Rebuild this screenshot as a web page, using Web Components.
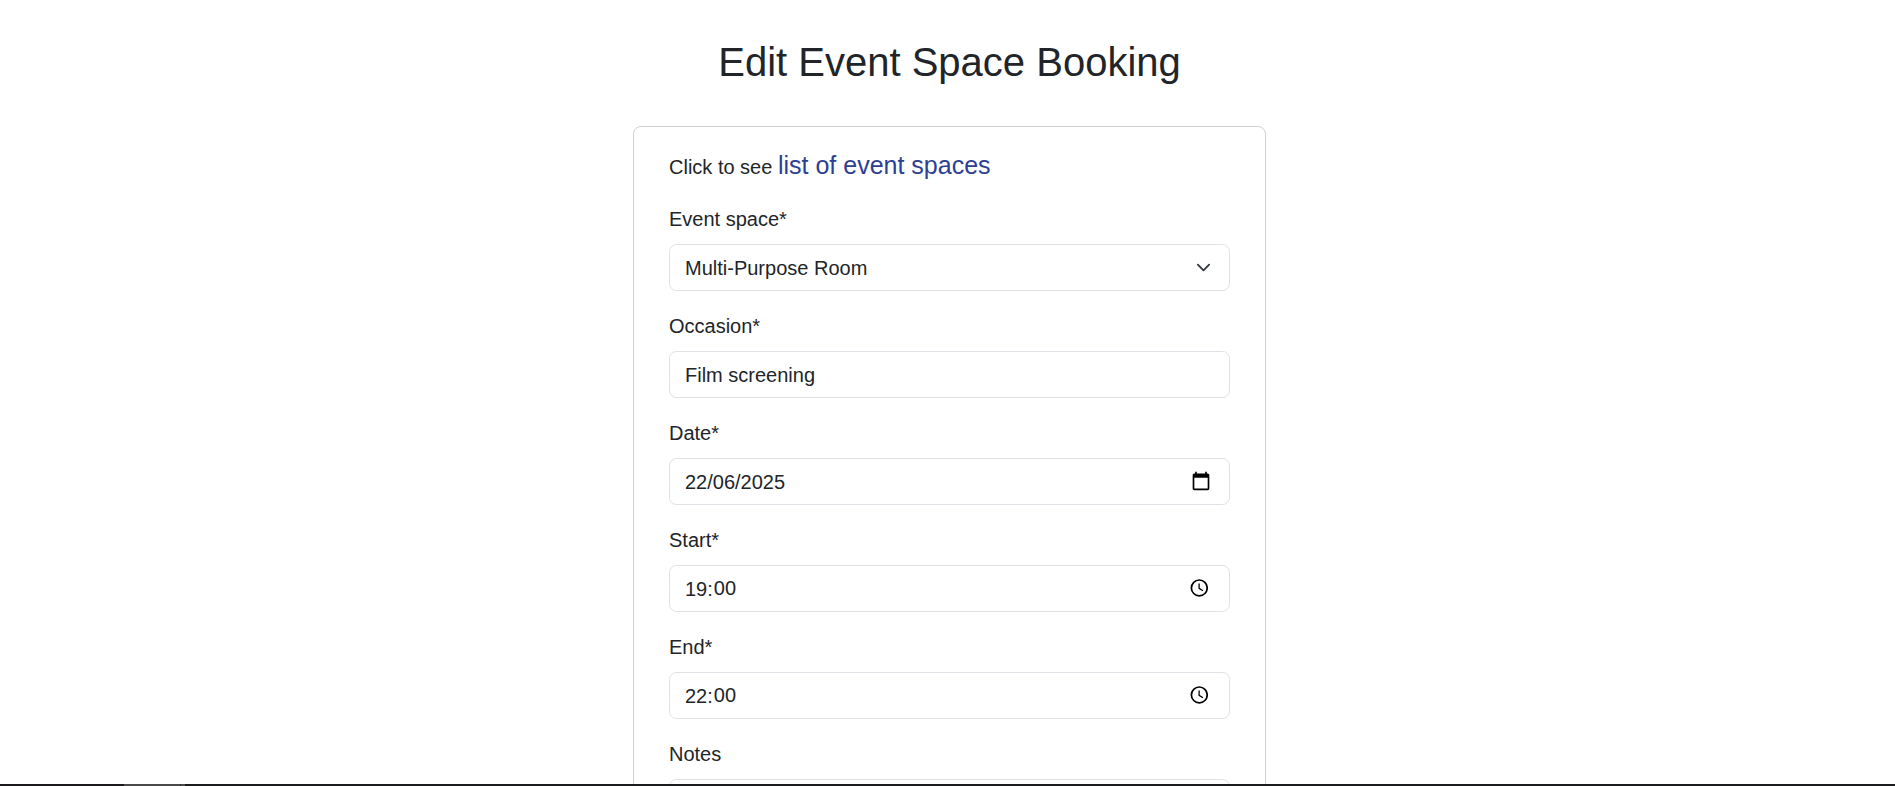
<!DOCTYPE html>
<html lang="en">
<head>
<meta charset="utf-8">
<title>Edit Event Space Booking</title>
<style>
html,body{margin:0;height:100%;background:#fff;overflow:hidden}
</style>
</head>
<body>
<booking-page>
  <span slot="title">Edit Event Space Booking</span>
  <booking-card>
    <list-hint>list of event spaces</list-hint>
    <form-field label="Event space*" icon="chevron">Multi-Purpose Room</form-field>
    <form-field label="Occasion*">Film screening</form-field>
    <form-field label="Date*" icon="calendar">22/06/2025</form-field>
    <form-field label="Start*" icon="clock"><time-value hours="19" minutes="00"></time-value></form-field>
    <form-field label="End*" icon="clock"><time-value hours="22" minutes="00"></time-value></form-field>
    <form-field label="Notes"></form-field>
  </booking-card>
</booking-page>
<script>
class BaseElement extends HTMLElement {
  constructor() { super(); this.attachShadow({ mode: 'open' }); }
  connectedCallback() { this.shadowRoot.innerHTML = this.render(); }
}
const icons = {
  chevron: '<svg class="chevron" width="15" height="15" viewBox="0 0 16 16"><path fill="none" stroke="#343a40" stroke-linecap="round" stroke-linejoin="round" stroke-width="2" d="m2 5 6 6 6-6"/></svg>',
  calendar: '<svg class="calendar" width="20" height="20" viewBox="0 0 24 24"><path d="M20 3h-1V1h-2v2H7V1H5v2H4c-1.1 0-2 .9-2 2v16c0 1.1.9 2 2 2h16c1.1 0 2-.9 2-2V5c0-1.1-.9-2-2-2zm0 18H4V8h16v13z"/></svg>',
  clock: '<svg class="clock" width="18" height="18" viewBox="0 0 18 18"><circle cx="9.3" cy="8.9" r="7.9" fill="none" stroke="#000" stroke-width="1.7"/><path d="M9.1 4.4v5l3.9 2.4" fill="none" stroke="#000" stroke-width="1.3"/></svg>'
};
customElements.define('booking-page', class extends BaseElement {
  render() { return `<style>
    :host{display:flex;flex-direction:column;height:100vh;overflow:hidden;color:#212529;font:20px/30px "Liberation Sans",Arial,sans-serif}
    main{flex:1;min-height:0;overflow:hidden;display:flex;flex-direction:column;align-items:center;padding-left:4px}
    h1{margin:38px 0 40px;font-size:40px;line-height:48px;font-weight:400}
    footer{height:2px;flex:none;background:linear-gradient(90deg,#1b191b 124px,#4a4a4a 124px 180px,#333 180px 181px,#4a4a4a 181px 185px,#1b1c1e 185px)}
  </style><main><h1><slot name="title"></slot></h1><slot></slot></main><footer></footer>`; }
});
customElements.define('booking-card', class extends BaseElement {
  render() { return `<style>
    :host{display:block;flex:none;box-sizing:border-box;width:633px;height:900px;border:1px solid #cfd0d1;border-radius:8px;padding:20px 35px}
  </style><slot></slot>`; }
});
customElements.define('list-hint', class extends BaseElement {
  render() { return `<style>
    :host{display:block;height:37px;line-height:37px;margin-bottom:20px}
    a{font-size:25px;color:#2e3e93}
  </style>Click to see <a><slot></slot></a>`; }
});
customElements.define('form-field', class extends BaseElement {
  render() { return `<style>
    :host{display:block;margin-bottom:20px}
    label{display:block;margin-bottom:10px}
    .control{display:flex;align-items:center;justify-content:space-between;box-sizing:border-box;height:47px;padding:0 15px;border:1px solid #dee2e6;border-radius:7.5px}
    svg{display:block;flex:none}
    .chevron{margin-right:3px}
    .calendar{margin-right:3px;margin-bottom:1px}
    .clock{margin-right:6px;margin-bottom:1px}
  </style><label>${this.getAttribute('label')}</label><div class="control"><span><slot></slot></span>${icons[this.getAttribute('icon')] || ''}</div>`; }
});
customElements.define('time-value', class extends BaseElement {
  render() { return `<style>
    :host{display:flex}
    .minutes{margin:-1px 0 1px 1px}
  </style><span>${this.getAttribute('hours')}:</span><span class="minutes">${this.getAttribute('minutes')}</span>`; }
});
</script>
</body>
</html>
